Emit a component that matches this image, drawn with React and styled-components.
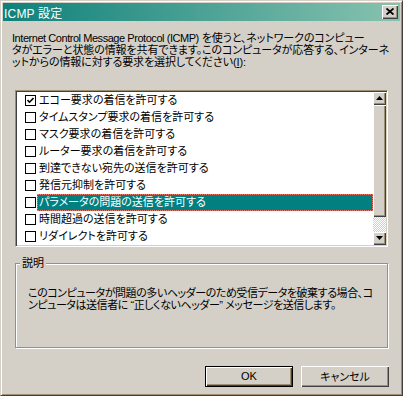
import React from 'react';
import styled, { createGlobalStyle } from 'styled-components';

const C = {
  face: '#D4D0C8',
  shadow: '#9D8F74',
  dark: '#404040',
  hi: '#FFFFFF',
  sel: '#008080',
};
const FONT = `"Liberation Sans", "Noto Sans CJK JP", sans-serif`;

const Global = createGlobalStyle`
  html, body { margin: 0; padding: 0; background: ${C.face}; }
  body { font-family: ${FONT}; }
  #root { width: 403px; height: 396px; }
`;

const Window = styled.div`
  box-sizing: border-box;
  width: 403px;
  height: 396px;
  background: ${C.face};
  border: 1px solid;
  border-color: ${C.face} ${C.dark} ${C.dark} ${C.face};
  box-shadow: inset 1px 1px 0 ${C.hi}, inset -1px -1px 0 ${C.shadow};
  padding: 2px;
  display: flex;
  flex-direction: column;
  font-family: ${FONT};
  font-size: 11px;
  color: #000;
  font-feature-settings: "palt";
`;

const TitleBar = styled.div`
  height: 18px;
  flex: none;
  display: flex;
  align-items: center;
  padding: 0 2px 0 1px;
  background: linear-gradient(to right, #0e817b, #88c2af);
  color: #fff;
  font-size: 12px;
`;

const Title = styled.span`
  letter-spacing: 0.2px;
`;

const Bevel = `
  background: ${C.face};
  box-shadow: inset 1px 1px 0 ${C.hi}, inset -1px -1px 0 ${C.dark}, inset -2px -2px 0 ${C.shadow};
`;

const CloseBtn = styled.div`
  margin-left: auto;
  width: 16px;
  height: 14px;
  box-sizing: border-box;
  ${Bevel}
  display: flex;
  align-items: center;
  justify-content: center;
  padding: 0 1px 1px 0;
`;

const Intro = styled.div`
  margin: 11px 0 0 9px;
  line-height: 12px;
  white-space: nowrap;
  letter-spacing: -0.1px;
`;

const Latin = styled.span`
  letter-spacing: -0.45px;
`;

const ListBox = styled.div`
  margin: 22px 0 0 12px;
  width: 373px;
  height: 157px;
  box-sizing: border-box;
  border: 1px solid;
  border-color: ${C.shadow} ${C.hi} ${C.hi} ${C.shadow};
  box-shadow: inset 1px 1px 0 ${C.dark}, inset -1px -1px 0 ${C.face};
  padding: 1px;
  background: #fff;
  display: flex;
  flex: none;
`;

const Rows = styled.div`
  flex: 1;
  display: flex;
  flex-direction: column;
  min-width: 0;
`;

const Row = styled.div`
  height: 17px;
  flex: none;
  display: flex;
  align-items: center;
  white-space: nowrap;
`;

const Check = styled.span`
  width: 11px;
  height: 11px;
  box-sizing: border-box;
  border: 1px solid #000;
  background: #fff;
  margin-left: 8px;
  flex: none;
  display: flex;
  align-items: center;
  justify-content: center;
`;

const Label = styled.span`
  margin-left: 1px;
  height: 17px;
  box-sizing: border-box;
  padding: 0 1px;
  line-height: 15px;
  border: 1px dotted ${p => (p.$sel ? '#f07a6a' : 'transparent')};
  background: ${p => (p.$sel ? C.sel : 'transparent')};
  color: ${p => (p.$sel ? '#fff' : '#000')};
  flex: ${p => (p.$sel ? 1 : 'none')};
`;

const ScrollBar = styled.div`
  width: 13px;
  flex: none;
  display: flex;
  flex-direction: column;
`;

const Arrow = styled.div`
  height: 13px;
  flex: none;
  box-sizing: border-box;
  ${Bevel}
  display: flex;
  align-items: center;
  justify-content: center;
  padding: 0 1px 1px 0;
`;

const Thumb = styled.div`
  flex: 1;
  ${Bevel}
`;

const Track = styled.div`
  height: 15px;
  flex: none;
  background: repeating-conic-gradient(${C.face} 0 25%, #fff 0 50%) 0 0 / 2px 2px;
`;

const Group = styled.fieldset`
  margin: 10px 0 0 12px;
  width: 373px;
  height: 91px;
  box-sizing: border-box;
  border: 1px solid ${C.shadow};
  box-shadow: 1px 1px 0 ${C.hi}, inset 1px 1px 0 ${C.hi};
  padding: 0;
  min-width: 0;
  flex: none;
`;

const Legend = styled.legend`
  margin-left: 4px;
  padding: 0 2px;
  line-height: 12px;
  font-size: 11px;
  background: ${C.face};
`;

const Desc = styled.div`
  margin: 18px 0 0 12px;
  line-height: 12px;
  white-space: nowrap;
  letter-spacing: -0.45px;
`;

const Buttons = styled.div`
  display: flex;
  justify-content: flex-end;
  gap: 8px;
  margin-top: 18px;
  padding-right: 11px;
`;

const Button = styled.button`
  width: 88px;
  height: 21px;
  box-sizing: border-box;
  font-family: ${FONT};
  font-size: 11px;
  font-feature-settings: "palt";
  color: #000;
  background: ${C.face};
  border: ${p => (p.$default ? '1px solid #000' : '0')};
  box-shadow: inset 1px 1px 0 ${C.hi}, inset -1px -1px 0 ${C.dark}, inset -2px -2px 0 ${C.shadow};
  padding: 0 0 1px;
  margin: 0;
`;

const items = [
  'エコー要求の着信を許可する',
  'タイムスタンプ要求の着信を許可する',
  'マスク要求の着信を許可する',
  'ルーター要求の着信を許可する',
  '到達できない宛先の送信を許可する',
  '発信元抑制を許可する',
  'パラメータの問題の送信を許可する',
  '時間超過の送信を許可する',
  'リダイレクトを許可する',
];

const CheckMark = () => (
  <svg width="7" height="7" viewBox="0 0 7 7">
    <polyline points="0.5,3 2.5,5.2 6.5,1" fill="none" stroke="#000" strokeWidth="1.6" />
  </svg>
);

const Tri = ({ down }) => (
  <svg width="7" height="4" viewBox="0 0 7 4">
    <polygon points={down ? '0,0 7,0 3.5,4' : '0,4 7,4 3.5,0'} fill="#000" />
  </svg>
);

export default function App() {
  return (
    <>
      <Global />
      <Window>
        <TitleBar>
          <Title>ICMP 設定</Title>
          <CloseBtn>
            <svg width="8" height="7" viewBox="0 0 8 7">
              <path d="M0.5 0.5 L7.5 6.5 M7.5 0.5 L0.5 6.5" stroke="#000" strokeWidth="1.8" />
            </svg>
          </CloseBtn>
        </TitleBar>
        <Intro>
          <div>
            <Latin>Internet Control Message Protocol (ICMP)</Latin> を使うと、ネットワークのコンピュー
          </div>
          <div>タがエラーと状態の情報を共有できます。このコンピュータが応答する、インターネ</div>
          <div>
            ットからの情報に対する要求を選択してください(<u>I</u>):
          </div>
        </Intro>
        <ListBox>
          <Rows>
            {items.map((t, i) => (
              <Row key={t}>
                <Check>{i === 0 && <CheckMark />}</Check>
                <Label $sel={i === 6}>{t}</Label>
              </Row>
            ))}
          </Rows>
          <ScrollBar>
            <Arrow>
              <Tri />
            </Arrow>
            <Thumb />
            <Track />
            <Arrow>
              <Tri down />
            </Arrow>
          </ScrollBar>
        </ListBox>
        <Group>
          <Legend>説明</Legend>
          <Desc>
            <div>このコンピュータが問題の多いヘッダーのため受信データを破棄する場合、コ</div>
            <div>ンピュータは送信者に “正しくないヘッダー” メッセージを送信します。</div>
          </Desc>
        </Group>
        <Buttons>
          <Button $default>OK</Button>
          <Button>キャンセル</Button>
        </Buttons>
      </Window>
    </>
  );
}
